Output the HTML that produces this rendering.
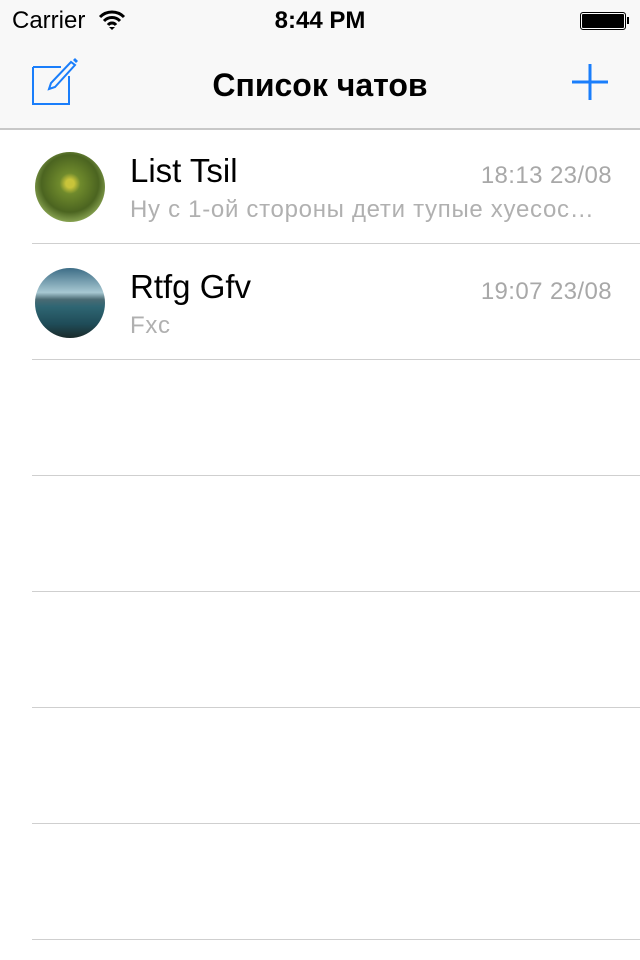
<!DOCTYPE html>
<html><head><meta charset="utf-8"><style>
body{margin:0;width:640px;height:960px;background:#fff;font-family:"Liberation Sans","DejaVu Sans",sans-serif;position:relative;overflow:hidden}
.hdr{position:absolute;left:0;top:0;width:640px;height:128px;background:#f8f8f8;border-bottom:2px solid #c8c8c8}
.sep{position:absolute;left:32px;right:0;height:1px;background:#cfcfcf}
.t{position:absolute;white-space:nowrap}
.name{font-size:33px;color:#000;left:130px}
.time{font-size:24px;color:#a8a8a8;right:28px;letter-spacing:0.4px}
.msg{font-size:24px;color:#b0b0b0;left:130px;letter-spacing:0.7px}
.av{position:absolute;left:35px;width:70px;height:70px;border-radius:50%}
</style></head><body>
<div class="hdr">
<div class="t" style="left:12px;top:7px;font-size:24px">Carrier</div>
<svg style="position:absolute;left:98px;top:10px" width="28" height="20" viewBox="0 0 28 20"><path d="M2 7a17 17 0 0 1 24 0M6 11a11 11 0 0 1 16 0M10 15a5 5 0 0 1 8 0" stroke="#000" stroke-width="3" fill="none"/><path d="M11 17l3 3 3-3z" fill="#000"/></svg>
<div class="t" style="left:0;width:640px;text-align:center;top:7px;font-size:24px;font-weight:bold">8:44 PM</div>
<div style="position:absolute;left:580px;top:12px;width:44px;height:16px;border:1px solid #000;border-radius:3px;background:#000;box-shadow:inset 0 0 0 1px #fff"></div>
<div style="position:absolute;left:627px;top:17px;width:2px;height:7px;background:#000"></div>
<svg style="position:absolute;left:30px;top:58px" width="50" height="50" viewBox="0 0 50 50"><path d="M3 9V46H39V18M3 9H31" stroke="#1a7efb" stroke-width="2" fill="none"/><path d="M19 31l2-6 20-21 4 3-20 22z" stroke="#1a7efb" stroke-width="2" fill="#f8f8f8"/><path d="M43 2l2-2 3 3-2 2z" fill="#1a7efb"/></svg>
<div class="t" style="left:0;width:640px;text-align:center;top:67px;font-size:32px;font-weight:bold">Список чатов</div>
<svg style="position:absolute;left:572px;top:64px" width="36" height="36"><path d="M18 0V36M0 18H36" stroke="#1a7efb" stroke-width="3"/></svg>
</div>
<div class="av" style="top:152px;background:radial-gradient(circle at 50% 45%,#c9c43a 0 8%,#6f8a2c 20%,#4b6420 55%,#8aa553 75%,#556b28)"></div>
<div class="t name" style="top:152px">List Tsil</div>
<div class="t time" style="top:162px">18:13 23/08</div>
<div class="t msg" style="top:196px">Ну с 1-ой стороны дети тупые хуесос…</div>
<div class="sep" style="top:243px"></div>
<div class="av" style="top:268px;background:linear-gradient(#3d6d86 0%,#a7c8d2 35%,#4a6a73 45%,#2f6673 55%,#1f4c58 80%,#1a2a2a 100%)"></div>
<div class="t name" style="top:268px">Rtfg Gfv</div>
<div class="t time" style="top:278px">19:07 23/08</div>
<div class="t msg" style="top:312px">Fxc</div>
<div class="sep" style="top:359px"></div>
<div class="sep" style="top:475px"></div>
<div class="sep" style="top:591px"></div>
<div class="sep" style="top:707px"></div>
<div class="sep" style="top:823px"></div>
<div class="sep" style="top:939px"></div>
</body></html>
